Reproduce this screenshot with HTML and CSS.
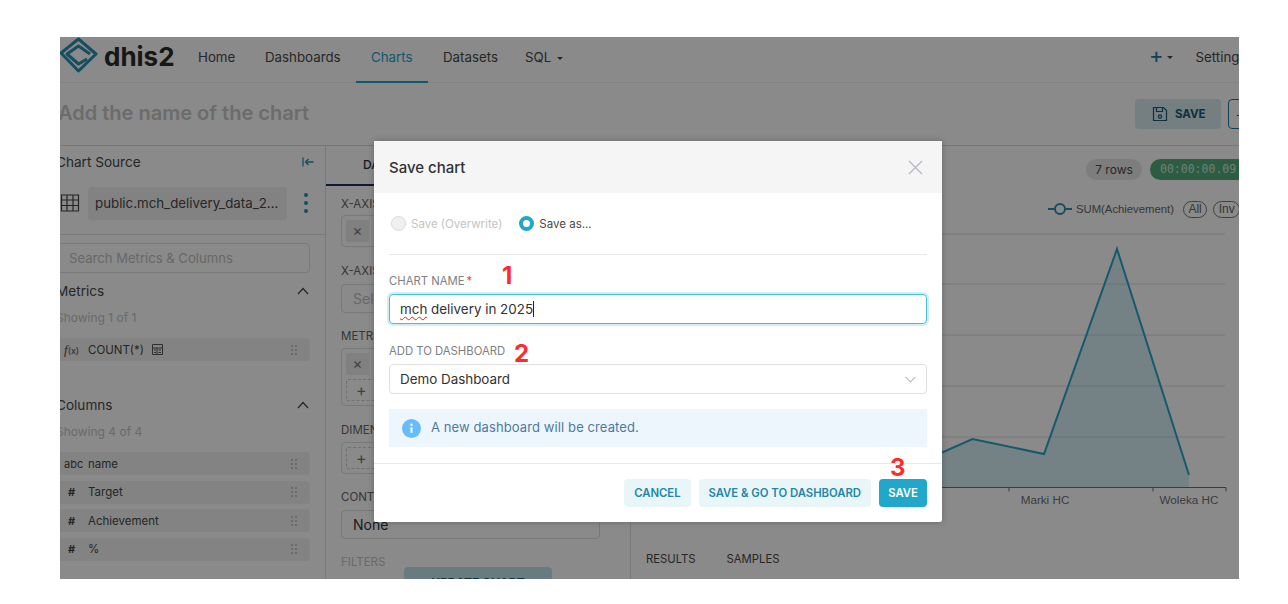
FILE: index.html
```html
<!DOCTYPE html>
<html lang="en">
<head>
  <meta charset="UTF-8" />
  <meta name="viewport" content="width=device-width, initial-scale=1.0" />
  <title>Save chart</title>
  <link rel="stylesheet" href="styles.css">
</head>
<body>
  <div class="frame">
    <header class="topbar">
      <div class="brand">
        <svg class="brand-mark" width="38" height="36" viewBox="0 0 38 36" fill="none" stroke="#2a8fb0" stroke-width="3" stroke-linejoin="round">
          <path d="M18.500 2 36 17 18.500 34 1 16Z" />
          <path d="M27 22 18.500 27 7 17 18.500 9 30 17" />
        </svg>
        <span class="brand-name">dhis2</span>
      </div>
      <nav class="nav">
        <a class="nav-link nav-home">Home</a>
        <a class="nav-link nav-dash">Dashboards</a>
        <a class="nav-link nav-charts active">Charts</a>
        <a class="nav-link nav-data">Datasets</a>
        <a class="nav-link nav-sql">SQL <i class="caret"></i></a>
      </nav>
      <div class="top-right">
        <span class="plus">+</span><i class="caret"></i>
        <a class="nav-link nav-settings">Settings</a>
      </div>
    </header>

    <div class="title-row">
      <h1 class="chart-title">Add the name of the chart</h1>
      <div class="title-actions">
        <button class="btn-soft">
          <svg width="16" height="16" viewBox="0 0 16 16" fill="none" stroke="#1c5a75" stroke-width="1.2"><path d="M1.500 1.500h10l3 3v10h-13z" /><path d="M4.500 1.500v4h6v-4" /><circle cx="8" cy="10.500" r="1.600" /></svg>
          SAVE
        </button>
        <button class="btn-outline">+</button>
      </div>
    </div>

    <div class="workspace">
      <aside class="sidebar">
        <div class="side-head">
          <span>Chart Source</span>
          <svg width="12" height="10" viewBox="0 0 12 10" fill="none" stroke="#2a8fb0" stroke-width="1.3"><path d="M1 0.500v9M11.500 5H3.500M6.500 2 3.500 5l3 3" /></svg>
        </div>
        <div class="dataset">
          <svg width="20" height="20" viewBox="0 0 20 20" fill="none" stroke="#444" stroke-width="1.2"><path d="M1.500 2h17v16h-17zM1.500 7h17M1.500 12.500h17M7 2v16M13 2v16" /></svg>
          <div class="dataset-name">public.mch_delivery_data_2...</div>
          <span class="kebab"><i></i><i></i><i></i></span>
        </div>
        <div class="search">Search Metrics &amp; Columns</div>

        <div class="group-head">
          <span>Metrics</span>
          <svg width="12" height="8" viewBox="0 0 12 8" fill="none" stroke="#444" stroke-width="1.2"><path d="M1 7 6 1.500 11 7" /></svg>
        </div>
        <div class="showing">Showing 1 of 1</div>
        <div class="field-row">
          <span class="field-type fx"><em>f</em>(x)</span>
          <span>COUNT(*)</span>
          <svg class="calc" width="11" height="11" viewBox="0 0 11 11" fill="none" stroke="#555"><path d="M.5.500h10v10H.5zM.5 4h10M5 4v6.500" /><path d="M2 6h2M2 8.500h2M6.500 6h2.500M6.500 8.500h2.500" /></svg>
          <span class="grip"></span>
        </div>

        <div class="group-head columns-head">
          <span>Columns</span>
          <svg width="12" height="8" viewBox="0 0 12 8" fill="none" stroke="#444" stroke-width="1.2"><path d="M1 7 6 1.500 11 7" /></svg>
        </div>
        <div class="showing">Showing 4 of 4</div>
        <div class="field-list">
          <div class="field-row"><span class="field-type">abc</span><span>name</span><span class="grip"></span></div>
          <div class="field-row"><span class="field-type hash">#</span><span>Target</span><span class="grip"></span></div>
          <div class="field-row"><span class="field-type hash">#</span><span>Achievement</span><span class="grip"></span></div>
          <div class="field-row"><span class="field-type hash">#</span><span>%</span><span class="grip"></span></div>
        </div>
      </aside>

      <section class="controls">
        <div class="tabs"><span class="tab-on">DATA</span></div>
        <div class="ctl-body">
          <div class="ctl-label">X-AXIS</div>
          <div class="ctl-box ctl-x"><span class="ctl-chip">&times;</span></div>
          <div class="ctl-label">X-AXIS SORT BY</div>
          <div class="ctl-input muted">Select</div>
          <div class="ctl-label">METRICS</div>
          <div class="ctl-box ctl-metrics">
            <span class="ctl-chip">&times;</span>
            <span class="ctl-add">+</span>
          </div>
          <div class="ctl-label">DIMENSIONS</div>
          <div class="ctl-box ctl-dims"><span class="ctl-add">+</span></div>
          <div class="ctl-label">CONTRIBUTION MODE</div>
          <div class="ctl-input ctl-none">None</div>
          <div class="ctl-label faint">FILTERS</div>
        </div>
        <button class="update-btn">UPDATE CHART</button>
      </section>

      <section class="result">
        <div class="stats">
          <span class="pill-rows">7 rows</span>
          <span class="pill-time">00:00:00.09</span>
        </div>
        <div class="legend">
          <svg width="24" height="12" viewBox="0 0 24 12" fill="none" stroke="#2a8fb0" stroke-width="2"><path d="M0 6h6M18 6h6" /><circle cx="12" cy="6" r="5" /></svg>
          <span>SUM(Achievement)</span>
          <span class="legend-btn">All</span>
          <span class="legend-btn">Inv</span>
        </div>
        <svg class="chart" width="608" height="276" viewBox="631 230 608 276">
          <g stroke="#dcdce6" stroke-width="1">
            <path d="M640 234H1225M640 284H1225M640 335H1225M640 386H1225M640 437H1225" />
          </g>
          <path d="M900 471 972.500 439 1044 454 1117 249 1189 475V487.500H900Z" fill="#20a7c9" fill-opacity=".18" />
          <path d="M900 471 972.500 439 1044 454 1117 249 1189 475" fill="none" stroke="#2aa5c5" stroke-width="2" />
          <path d="M640 487.500H1226M1009 487.500v4M1153 487.500v4M1226 487.500v4" fill="none" stroke="#6e7079" />
          <text x="1045" y="504" text-anchor="middle" class="axis-text">Marki HC</text>
          <text x="1189" y="504" text-anchor="middle" class="axis-text">Woleka HC</text>
        </svg>
        <div class="result-tabs"><span>RESULTS</span><span>SAMPLES</span></div>
      </section>
    </div>

    <div class="mask"></div>

    <div class="modal">
      <div class="modal-head">
        <span>Save chart</span>
        <svg width="15" height="15" viewBox="0 0 15 15" fill="none" stroke="#b8b8c2" stroke-width="1.3"><path d="M1 1 14 14M14 1 1 14" /></svg>
      </div>
      <div class="modal-body">
        <div class="radios">
          <label class="radio disabled"><i class="dot"></i>Save (Overwrite)</label>
          <label class="radio"><i class="dot on"></i>Save as...</label>
        </div>
        <div class="form-label">CHART NAME<b>*</b></div>
        <div class="text-input focused"><span class="typo">mch</span>&nbsp;delivery in 2025<i class="cursor"></i></div>
        <div class="form-label second">ADD TO DASHBOARD</div>
        <div class="text-input">
          Demo Dashboard
          <svg width="11" height="7" viewBox="0 0 11 7" fill="none" stroke="#bdbdbd" stroke-width="1.1"><path d="M.5.800 5.500 6l5-5.200" /></svg>
        </div>
        <div class="alert">
          <svg width="19" height="19" viewBox="0 0 19 19"><circle cx="9.500" cy="9.500" r="9.500" fill="#66bcfe" /><circle cx="9.500" cy="5.800" r="1.200" fill="#fff" /><path d="M8.500 8.300h2v5.500h-2z" fill="#fff" /></svg>
          <span>A new dashboard will be created.</span>
        </div>
      </div>
      <div class="modal-foot">
        <button class="btn-light">CANCEL</button>
        <button class="btn-light">SAVE &amp; GO TO DASHBOARD</button>
        <button class="btn-primary">SAVE</button>
      </div>
    </div>

    <span class="step step-1">1</span>
    <span class="step step-2">2</span>
    <span class="step step-3">3</span>
  </div>
</body>
</html>
```

FILE: styles.css
```css
* {
  box-sizing: border-box;
}
body {
  margin: 0;
  padding: 37px 0 0 60px;
  background-color: #fff;
  font-family: 'Inter', sans-serif;
  color: #484848;
}
.frame {
  position: relative;
  width: 1179px;
  height: 542px;
  overflow: hidden;
  background-color: #fff;
}
.mask {
  position: absolute;
  inset: 0;
  background-color: rgba(0, 0, 0, 0.46);
}
button {
  font-family: 'Inter', sans-serif;
  border: none;
}

/* top bar */
.topbar {
  display: flex;
  height: 46px;
  border-bottom: 1px solid #f0f0f0;
}
.brand {
  display: flex;
  align-items: center;
  width: 138px;
  flex: none;
  padding-bottom: 6px;
}
.brand-mark {
  align-self: flex-start;
  flex: none;
}
.brand-name {
  margin-left: 6px;
  font-size: 26px;
  font-weight: 700;
  color: #2c2c2c;
  line-height: 34px;
}
.nav {
  display: flex;
  flex: 1;
}
.nav-link {
  display: block;
  font-size: 13.300px;
  line-height: 40px;
  height: 46px;
  color: #484848;
}
.nav-home {
  width: 67px;
}
.nav-dash {
  width: 91px;
}
.nav-charts {
  width: 72px;
  padding-left: 15px;
  color: #20a7c9;
  border-bottom: 2px solid #20a7c9;
  margin-right: 15px;
}
.nav-data {
  width: 82px;
}
.caret {
  display: inline-block;
  width: 0;
  height: 0;
  margin-left: 2px;
  vertical-align: middle;
  border-left: 3px solid transparent;
  border-right: 3px solid transparent;
  border-top: 3px solid #484848;
}
.top-right {
  display: flex;
  align-items: center;
  width: 90px;
  flex: none;
  height: 40px;
  margin-left: -1px;
  white-space: nowrap;
}
.plus {
  font-size: 22px;
  line-height: 36px;
  height: 40px;
  color: #1c7a9c;
  margin-right: 1px;
}
.nav-settings {
  margin-left: 23px;
  height: 40px;
}

/* title row */
.title-row {
  display: flex;
  align-items: center;
  justify-content: space-between;
  height: 63px;
  border-bottom: 1px solid #dcdcdc;
  margin-left: -2px;
  padding-bottom: 1px;
}
.chart-title {
  margin: -1px 0 0;
  font-size: 20px;
  font-weight: 600;
  color: #c8c8c8;
}
.title-actions {
  display: flex;
  gap: 7px;
  margin-right: -13px;
}
.btn-soft {
  display: flex;
  align-items: center;
  gap: 7px;
  width: 86px;
  height: 30px;
  padding-left: 17px;
  border-radius: 4px;
  background-color: #d9e9ee;
  color: #1c5a75;
  font-size: 11.500px;
  font-weight: 700;
}
.btn-outline {
  width: 24px;
  height: 30px;
  padding: 0;
  border: 1px solid #1c7a9c;
  border-radius: 4px;
  background-color: #fff;
  color: #1c5a75;
}

/* three columns */
.workspace {
  display: flex;
  height: 433px;
}
.sidebar {
  flex: none;
  width: 270px;
  margin-left: -4px;
  border-right: 1px solid #e0e0e0;
  font-size: 13px;
}
.side-head {
  display: flex;
  align-items: center;
  justify-content: space-between;
  height: 31px;
  padding: 0 11px 0 0;
  font-size: 13.600px;
}
.dataset {
  display: flex;
  align-items: center;
  height: 58px;
  padding: 10px 16px 15px 4px;
  border-bottom: 1px solid #e0e0e0;
}
.dataset svg {
  flex: none;
}
.dataset-name {
  width: 199px;
  height: 33px;
  margin-left: 8px;
  padding-left: 7px;
  border-radius: 4px;
  background-color: #f0f0f0;
  font-size: 13.300px;
  line-height: 33px;
  white-space: nowrap;
}
.kebab {
  display: flex;
  flex-direction: column;
  gap: 4px;
  margin-left: 17px;
}
.kebab i {
  width: 4px;
  height: 4px;
  border-radius: 50%;
  background-color: #2a8fb0;
}
.search {
  width: 254px;
  height: 30px;
  margin-top: 8px;
  padding-left: 12px;
  border: 1px solid #e0e0e0;
  border-radius: 4px;
  font-size: 13.100px;
  line-height: 29px;
  color: #c0c0c0;
}
.group-head {
  display: flex;
  align-items: center;
  justify-content: space-between;
  width: 254px;
  height: 20px;
  margin-top: 8px;
  padding-right: 1px;
  font-size: 13.600px;
}
.columns-head {
  margin-top: 34px;
}
.showing {
  margin-top: 8px;
  height: 18px;
  font-size: 12px;
  line-height: 18px;
  color: #c4c4c4;
}
.field-row {
  display: flex;
  align-items: center;
  width: 254px;
  height: 23px;
  margin-top: 1px;
  border-radius: 4px;
  background-color: #f2f2f2;
  font-size: 11.500px;
  color: #484848;
}
.showing + .field-row,
.field-list {
  margin-top: 11px;
}
.field-list {
  display: flex;
  flex-direction: column;
  gap: 5.500px;
}
.field-list .field-row {
  margin-top: 0;
}
.field-type {
  width: 32px;
  padding-left: 8px;
  font-size: 11px;
  flex: none;
}
.hash {
  padding-left: 12px;
  font-weight: 700;
}
.fx em {
  font-family: 'Liberation Serif', serif;
  font-size: 13px;
}
.fx {
  font-size: 9px;
  white-space: nowrap;
}
.calc {
  margin-left: 8px;
}
.grip {
  margin-left: auto;
  margin-right: 12px;
  background-image: radial-gradient(circle, #c4c4c4 1.100px, transparent 1.200px);
  background-size: 4px 4px;
  width: 8px;
  height: 12px;
}

/* middle column */
.controls {
  position: relative;
  flex: none;
  width: 305px;
  border-right: 1px solid #e0e0e0;
  font-size: 12px;
  overflow: hidden;
}
.tabs {
  height: 40px;
  border-bottom: 2px solid #1e2f66;
  padding-left: 37px;
  line-height: 38px;
  font-size: 12px;
  font-weight: 500;
  color: #333;
}
.ctl-body {
  padding: 11px 0 0 15px;
}
.ctl-label {
  height: 14px;
  line-height: 14px;
  color: #666;
  font-size: 11.500px;
  white-space: nowrap;
}
.ctl-box {
  width: 259px;
  margin: 4px 0 17px;
  padding: 4px;
  border: 1px solid #e0e0e0;
  border-radius: 4px;
}
.ctl-x {
  height: 32px;
}
.ctl-metrics {
  height: 58px;
  margin-top: 5px;
}
.ctl-dims {
  height: 32px;
  margin-top: 5px;
  margin-bottom: 16px;
}
.ctl-chip {
  display: block;
  width: 23px;
  height: 22px;
  border-radius: 2px 0 0 2px;
  background-color: #ececec;
  color: #777;
  font-size: 15px;
  line-height: 22px;
  text-align: center;
}
.ctl-add {
  display: block;
  width: 200px;
  height: 22px;
  margin-top: 4px;
  padding-left: 9px;
  border: 1px dashed #d0d0d0;
  border-radius: 2px;
  color: #777;
  font-size: 16px;
  line-height: 20px;
}
.ctl-dims .ctl-add {
  margin-top: 0;
}
.ctl-input {
  width: 259px;
  height: 29px;
  margin: 6px 0 16px;
  padding-left: 11px;
  border: 1px solid #e0e0e0;
  border-radius: 4px;
  font-size: 14px;
  line-height: 27px;
  color: #333;
}
.muted {
  color: #c0c0c0;
}
.faint {
  color: #c4c4c4;
}
.update-btn {
  position: absolute;
  left: 78px;
  top: 421px;
  width: 148px;
  height: 30px;
  border-radius: 4px;
  background-color: #bfe4ed;
  color: #1c5a75;
  font-size: 12px;
  font-weight: 700;
}

/* right column */
.result {
  flex: none;
  width: 609px;
  font-size: 12px;
}
.stats {
  display: flex;
  gap: 8px;
  height: 35px;
  padding: 13px 0 0 455px;
  white-space: nowrap;
}
.pill-rows {
  flex: none;
  width: 56px;
  height: 21px;
  border-radius: 11px;
  background-color: #e8e8e8;
  text-align: center;
  line-height: 21px;
}
.pill-time {
  flex: none;
  width: 100px;
  height: 21px;
  padding-left: 10px;
  border-radius: 11px;
  background-color: #52ad7c;
  color: #cfe9da;
  font-family: 'DejaVu Sans Mono', monospace;
  font-size: 11.500px;
  line-height: 21px;
}
.legend {
  display: flex;
  align-items: center;
  height: 22px;
  margin-top: 17px;
  padding-left: 417px;
  white-space: nowrap;
  color: #666;
  font-family: 'Liberation Sans', sans-serif;
  font-size: 11.300px;
}
.legend svg {
  margin-right: 4px;
  flex: none;
}
.legend-btn {
  flex: none;
  margin-left: 9px;
  padding: 0 4.500px;
  height: 17px;
  line-height: 15px;
  border: 1px solid #777;
  border-radius: 9px;
  font-size: 12px;
}
.legend-btn + .legend-btn {
  margin-left: 6px;
}
.chart {
  display: block;
  margin-top: 10px;
}
.axis-text {
  font-family: 'Liberation Sans', sans-serif;
  font-size: 11.700px;
  fill: #6e7079;
}
.result-tabs {
  display: flex;
  gap: 31px;
  margin-top: 46px;
  padding-left: 15px;
  font-size: 11.300px;
  color: #484848;
}

/* modal */
.modal {
  position: absolute;
  left: 314px;
  top: 104px;
  width: 568px;
  height: 381px;
  border-radius: 2px;
  background-color: #fff;
  box-shadow: 0 0 6px rgba(0, 0, 0, 0.25);
  font-size: 14px;
  color: #323232;
}
.modal-head {
  display: flex;
  align-items: center;
  justify-content: space-between;
  height: 52px;
  padding: 0 19px 0 15px;
  background-color: #f5f5f5;
  font-size: 15px;
  font-weight: 500;
}
.modal-body {
  padding: 0 15px;
}
.radios {
  display: flex;
  align-items: center;
  gap: 17px;
  height: 62px;
  padding-left: 2px;
  border-bottom: 1px solid #e8e8e8;
}
.radio {
  display: flex;
  align-items: center;
  gap: 5px;
  font-size: 11.500px;
  color: #484848;
}
.disabled {
  color: #c4c4c4;
}
.dot {
  width: 15px;
  height: 15px;
  border: 1px solid #d9d9d9;
  border-radius: 50%;
  background-color: #f0f0f0;
}
.dot.on {
  border: 4px solid #20a7c9;
  background-color: #fff;
}
.form-label {
  margin-top: 19px;
  height: 14px;
  font-size: 11.300px;
  line-height: 14px;
  color: #808080;
}
.form-label b {
  margin-left: 2px;
  font-weight: 400;
  color: #e04355;
}
.form-label.second {
  margin-top: 20px;
}
.text-input {
  display: flex;
  align-items: center;
  height: 30px;
  margin-top: 6px;
  padding: 0 11px 0 10px;
  border: 1px solid #e0e0e0;
  border-radius: 4px;
  font-size: 13.400px;
  color: #323232;
}
.text-input svg {
  margin-left: auto;
  margin-right: -1px;
}
.focused {
  border-color: #45bed6;
  box-shadow: 0 0 0 2px rgba(32, 167, 201, 0.2);
}
.typo {
  text-decoration: underline wavy #e62020 1px;
  text-underline-offset: 2px;
}
.cursor {
  width: 1px;
  height: 16px;
  background-color: #222;
}
.alert {
  display: flex;
  align-items: center;
  gap: 10px;
  height: 38px;
  margin-top: 15px;
  padding: 0 0 2px 13px;
  background-color: #eef6fd;
  font-size: 13px;
  letter-spacing: 0.1px;
  color: #4d7a9e;
}
.alert svg {
  margin-top: 2px;
}
.modal-foot {
  display: flex;
  justify-content: flex-end;
  gap: 8px;
  margin-top: 16px;
  padding: 15px 15px 0;
  border-top: 1px solid #e8e8e8;
}
.modal-foot button {
  height: 28px;
  padding: 0;
  border-radius: 4px;
  font-size: 11.300px;
  font-weight: 600;
}
.modal-foot .btn-light {
  padding: 0 10px;
  background-color: #e9f6f9;
  color: #1f86a6;
}
.btn-primary {
  width: 48px;
  background-color: #20a7c9;
  color: #fff;
}

/* red numbers drawn over the screenshot */
.step {
  position: absolute;
  font-size: 24px;
  font-weight: 700;
  line-height: 24px;
  color: #ff2b2b;
}
.step-1 {
  left: 442px;
  top: 227px;
}
.step-2 {
  left: 454px;
  top: 305px;
}
.step-3 {
  left: 830px;
  top: 419px;
}
```
